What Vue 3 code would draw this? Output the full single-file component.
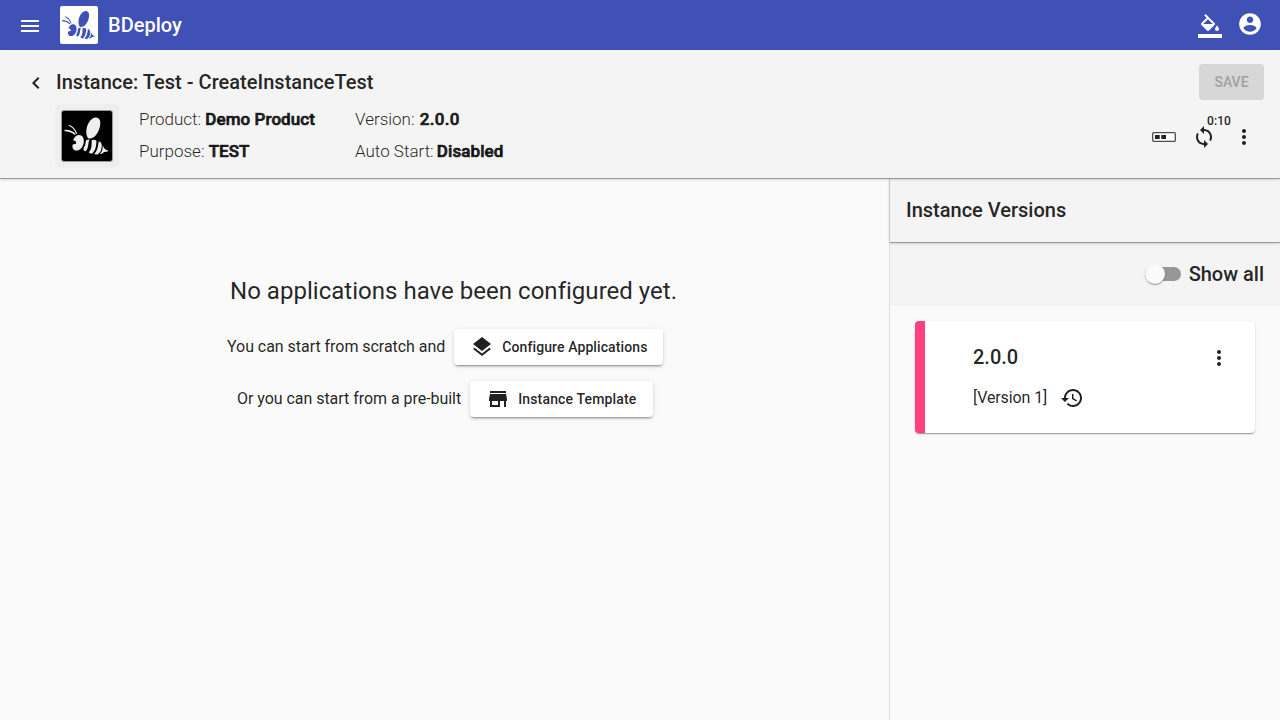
<script setup>
const facts = [
  { label: 'Product:', value: 'Demo Product' },
  { label: 'Version:', value: '2.0.0', wide: true },
  { label: 'Purpose:', value: 'TEST' },
  { label: 'Auto Start:', value: 'Disabled', tight: true },
]
</script>

<template>
  <div class="page">
    <svg class="defs" aria-hidden="true">
      <symbol id="bee" viewBox="0 0 154 154">
        <path d="M80 84C69 67 76 37 93 24C104 16 117 21 118 34C119 53 108 74 96 82Q88 86 80 84Z" />
        <path d="M51 74C62 73 69 83 67 97C65 112 55 122 44 122C35 122 30 112 33 103L43 101Q46 96 40 92L34 91C37 82 43 75 51 74Z" />
        <path d="M21 42Q40 48 47 71L43 70Q37 53 20 45ZM8 58Q29 56 43 72L38 73Q27 62 8 62Z" />
        <path d="M75 89L85 88C79 99 84 113 73 124C65 122 65 116 69 109C74 101 71 95 75 89ZM92 89Q99 88 106 91C106 107 104 121 92 132Q86 131 82 127C94 116 90 102 92 89ZM113 93Q120 95 122 101C123 112 122 125 111 133Q104 135 99 132C110 122 111 108 113 93ZM125 105C129 115 134 121 144 123Q137 126 130 126Q124 133 117 132C125 124 126 115 125 105Z" />
      </symbol>
      <symbol id="more" viewBox="0 0 24 24">
        <path d="M12 8c1.1 0 2-.9 2-2s-.9-2-2-2-2 .9-2 2 .9 2 2 2zm0 2c-1.1 0-2 .9-2 2s.9 2 2 2 2-.9 2-2-.9-2-2-2zm0 6c-1.1 0-2 .9-2 2s.9 2 2 2 2-.9 2-2-.9-2-2-2z" />
      </symbol>
    </svg>

    <header class="topbar">
      <svg class="icon menu" viewBox="0 0 24 24"><path d="M3 18h18v-2H3v2zm0-5h18v-2H3v2zm0-7v2h18V6H3z" /></svg>
      <span class="logo"><svg><use href="#bee" /></svg></span>
      <span class="brand">BDeploy</span>
      <svg class="icon fill" viewBox="0 0 24 24"><path d="M16.56 8.94L7.62 0 6.21 1.41l2.38 2.38-5.15 5.15c-.59.59-.59 1.54 0 2.12l5.5 5.5c.29.29.68.44 1.06.44s.77-.15 1.06-.44l5.5-5.5c.59-.58.59-1.53 0-2.12zM5.21 10L10 5.21 14.79 10H5.21zM19 11.5s-2 2.17-2 3.5c0 1.1.9 2 2 2s2-.9 2-2c0-1.33-2-3.5-2-3.5zM0 20h24v4H0z" /></svg>
      <svg class="icon user" viewBox="0 0 24 24"><path d="M12 2C6.48 2 2 6.48 2 12s4.48 10 10 10 10-4.48 10-10S17.52 2 12 2zm0 3c1.66 0 3 1.34 3 3s-1.34 3-3 3-3-1.34-3-3 1.34-3 3-3zm0 14.2c-2.5 0-4.71-1.28-6-3.22.03-1.99 4-3.08 6-3.08 1.99 0 5.97 1.09 6 3.08-1.29 1.94-3.5 3.22-6 3.22z" /></svg>
    </header>

    <section class="instance">
      <div class="title-row">
        <svg class="icon back" viewBox="0 0 24 24"><path d="M15.41 7.41L14 6l-6 6 6 6 1.41-1.41L10.83 12z" /></svg>
        <h1>Instance: Test - CreateInstanceTest</h1>
        <button class="save" disabled>SAVE</button>
      </div>
      <div class="detail-row">
        <div class="thumb"><span><svg><use href="#bee" /></svg></span></div>
        <div class="facts">
          <div v-for="f in facts" :key="f.label">{{ f.label }} <b :class="{ wide: f.wide, tight: f.tight }">{{ f.value }}</b></div>
        </div>
        <div class="tools">
          <svg class="icon" viewBox="0 0 24 24"><rect x=".7" y="7.7" width="22.6" height="8.6" rx="1" fill="#fff" stroke="#4c4c4c" stroke-width="1.3" /><path d="M3 10h4.700v4H3zM9.300 10h4.700v4H9.300z" /></svg>
          <span class="sync">
            <svg class="icon" viewBox="0 0 24 24"><path d="M12 4V1L8 5l4 4V6c3.31 0 6 2.69 6 6 0 1.010-.25 1.970-.7 2.800l1.460 1.460C19.540 15.030 20 13.570 20 12c0-4.420-3.580-8-8-8zm0 14c-3.310 0-6-2.690-6-6 0-1.010.25-1.970.7-2.800L5.240 7.740C4.460 8.970 4 10.430 4 12c0 4.420 3.580 8 8 8v3l4-4-4-4v3z" /></svg>
            <span class="badge">0:10</span>
          </span>
          <svg class="icon"><use href="#more" /></svg>
        </div>
      </div>
    </section>

    <div class="body">
      <main class="empty">
        <h2>No applications have been configured yet.</h2>
        <div class="choice first">
          <span>You can start from scratch and</span>
          <button class="raised">
            <svg class="icon" viewBox="0 0 24 24"><path d="M11.99 18.54l-7.37-5.73L3 14.070l9 7 9-7-1.630-1.270-7.380 5.740zM12 16l7.360-5.730L21 9l-9-7-9 7 1.630 1.270L12 16z" /></svg>
            Configure Applications
          </button>
        </div>
        <div class="choice second">
          <span>Or you can start from a pre-built</span>
          <button class="raised">
            <svg class="icon" viewBox="0 0 24 24"><path d="M20 4H4v2h16V4zm1 10v-2l-1-5H4l-1 5v2h1v6h10v-6h4v6h2v-6h1zm-9 4H6v-4h6v4z" /></svg>
            Instance Template
          </button>
        </div>
      </main>

      <aside class="versions">
        <div class="panel-title">Instance Versions</div>
        <div class="show-all">
          <span class="toggle"><i></i></span>
          <span>Show all</span>
        </div>
        <article class="card">
          <div class="card-head">
            <strong>2.0.0</strong>
            <svg class="icon"><use href="#more" /></svg>
          </div>
          <div class="card-sub">
            <span>[Version 1]</span>
            <svg class="icon" viewBox="0 0 24 24"><path d="M13 3c-4.970 0-9 4.030-9 9H1l3.890 3.890.07.14L9 12H6c0-3.870 3.130-7 7-7s7 3.130 7 7-3.130 7-7 7c-1.930 0-3.680-.79-4.940-2.060l-1.420 1.420C8.270 19.990 10.510 21 13 21c4.970 0 9-4.030 9-9s-4.030-9-9-9zm-1 5v5l4.280 2.540.72-1.210-3.500-2.080V8H12z" /></svg>
          </div>
        </article>
      </aside>
    </div>
  </div>
</template>

<style>
body { margin: 0; overflow: hidden; }
</style>

<style scoped>
* { box-sizing: border-box; }
.page { height: 720px; display: flex; flex-direction: column; background: #fafafa; color: rgba(0, 0, 0, .87); font-family: Roboto, "Helvetica Neue", sans-serif; font-size: 16px; }
.defs { display: none; }
.icon { width: 24px; height: 24px; flex: none; fill: currentColor; display: block; }
.topbar { height: 50px; flex: none; display: flex; align-items: center; background: #3f51b5; color: #fff; padding: 0 18px; }
.menu { margin-top: 2px; }
.logo { width: 38px; height: 38px; margin-left: 18px; background: #fff; border-radius: 2px; color: #3f51b5; }
.logo svg { width: 38px; height: 38px; display: block; fill: currentColor; }
.brand { margin-left: 10px; font-size: 20px; font-weight: 500; }
.fill { margin-left: auto; margin-top: 2px; }
.user { width: 26px; height: 26px; margin-left: 15px; margin-right: -1px; margin-top: -2px; }
.instance { position: relative; z-index: 2; height: 128px; flex: none; background: #f4f4f4; padding: 14px 16px 0 24px; box-shadow: 0 1px 0 #999, 0 1px 3px rgba(0, 0, 0, .25); }
.title-row { display: flex; align-items: center; height: 36px; }
.back { margin-top: 2px; }
h1 { margin: 0 0 0 8px; font-size: 20px; font-weight: 500; letter-spacing: .02px; }
.save { margin-left: auto; width: 65px; height: 36px; padding: 0; border: 0; border-radius: 4px; background: #d7d7d7; color: #a1a1a1; font: 500 14px Roboto, sans-serif; }
.detail-row { display: flex; padding-left: 31px; margin-top: 4px; }
.thumb { width: 64px; height: 64px; padding: 6px; border-radius: 5px; background: #eee; }
.thumb span { display: block; width: 52px; height: 52px; border: 1px solid #999; border-radius: 3px; background: #000; color: #eee; }
.thumb svg { width: 50px; height: 50px; display: block; fill: currentColor; }
.facts { display: grid; grid-template-columns: 216px auto; grid-auto-rows: 32px; line-height: 30px; margin-left: 20px; font-size: 17px; font-weight: 300; white-space: nowrap; }
.facts b { font-weight: 500; letter-spacing: .08px; -webkit-text-stroke: .7px currentColor; }
.facts b.wide { margin-left: 1px; letter-spacing: .35px; }
.facts b.tight { margin-left: -1px; }
.tools { display: flex; gap: 16px; margin: 21px 8px 0 auto; }
.sync { position: relative; }
.badge { position: absolute; left: 15px; top: -12px; font-size: 12px; line-height: 16px; font-weight: 500; letter-spacing: .1px; }
.body { flex: 1; min-height: 0; display: flex; }
.empty { width: 889px; flex: none; }
h2 { margin: 97px 0 0 230px; font-size: 24px; line-height: 32px; font-weight: 400; letter-spacing: .025px; white-space: nowrap; }
.choice { display: flex; align-items: center; height: 36px; white-space: nowrap; }
.choice > span { letter-spacing: -.04px; margin-top: -2px; }
.first { margin: 22px 0 0 227px; }
.second { margin: 16px 0 0 237px; }
.raised { display: flex; align-items: center; gap: 8px; height: 36px; margin-left: 9px; padding: 0 16px; border: 0; border-radius: 4px; background: #fff; color: inherit; font: 500 14px Roboto, sans-serif; letter-spacing: .1px; box-shadow: 0 3px 1px -2px rgba(0, 0, 0, .2), 0 2px 2px rgba(0, 0, 0, .14), 0 1px 5px rgba(0, 0, 0, .12); }
.second .raised { letter-spacing: .16px; }
.versions { width: 391px; border-left: 1px solid #e0e0e0; }
.panel-title { position: relative; height: 64px; padding: 0 16px; background: #f4f4f4; font-size: 20px; font-weight: 500; line-height: 64px; box-shadow: 0 1px 0 #999, 0 1px 3px rgba(0, 0, 0, .25); }
.show-all { display: flex; align-items: center; justify-content: flex-end; gap: 8px; height: 64px; padding: 0 16px; background: #f4f4f4; font-size: 20px; font-weight: 500; }
.toggle { width: 36px; height: 14px; border-radius: 7px; background: #979797; }
.toggle i { display: block; width: 20px; height: 20px; margin-top: -3px; border-radius: 50%; background: #fafafa; box-shadow: 0 2px 1px -1px rgba(0, 0, 0, .2), 0 1px 1px rgba(0, 0, 0, .14), 0 1px 3px rgba(0, 0, 0, .12); }
.card { width: 340px; height: 112px; margin: 15px 0 0 25px; padding: 24px 24px 0 48px; border-left: 10px solid #ff4081; border-radius: 4px; background: #fff; box-shadow: 0 2px 1px -1px rgba(0, 0, 0, .2), 0 1px 1px rgba(0, 0, 0, .14), 0 1px 3px rgba(0, 0, 0, .12); }
.card-head { display: flex; justify-content: space-between; height: 24px; font-size: 20px; line-height: 24px; }
.card-head strong { font-weight: 500; }
.card-head .icon { margin-top: 1px; }
.card-sub { display: flex; gap: 13px; margin-top: 17px; line-height: 24px; }
.card-sub span { letter-spacing: -.1px; }
</style>
